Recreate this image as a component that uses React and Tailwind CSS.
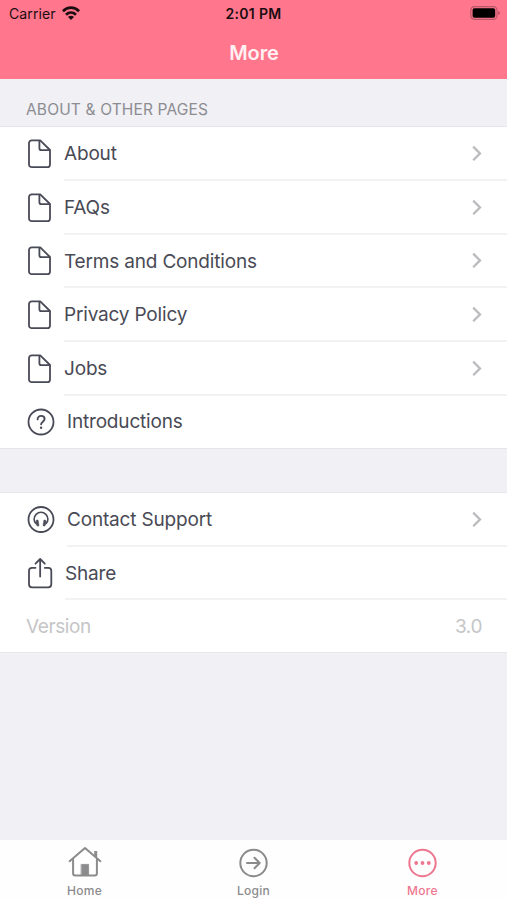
import React from 'react';

const FileIcon = () => (
  <svg width="38" height="32" viewBox="0 0 38 32" fill="none" stroke="#494a57" strokeWidth="1.8" strokeLinejoin="round" className="shrink-0">
    <path d="M5.8 2.3H14.2L24 12V26.4a2.8 2.8 0 0 1-2.8 2.8H5.8a2.8 2.8 0 0 1-2.8-2.8V5.1A2.8 2.8 0 0 1 5.8 2.3Z" />
    <path d="M13.4 2.6V10.2a2 2 0 0 0 2 2H23.8" />
  </svg>
);

const HelpIcon = () => (
  <svg width="41" height="32" viewBox="0 0 41 32" fill="none" stroke="#494a57" strokeWidth="1.8" className="shrink-0">
    <circle cx="15" cy="16" r="12.5" />
    <path d="M11.6 13.4c0-2.2 1.5-3.5 3.5-3.5s3.5 1.3 3.5 3.2c0 2.5-3.5 2.6-3.5 5.2" strokeWidth="1.9" strokeLinecap="round" />
    <circle cx="15.1" cy="21.8" r="1.2" fill="#494a57" stroke="none" />
  </svg>
);

const SupportIcon = () => (
  <svg width="41" height="32" viewBox="0 0 41 32" fill="none" stroke="#494a57" strokeWidth="1.8" className="shrink-0">
    <circle cx="15" cy="15.5" r="12.5" />
    <path d="M10 19.6C8.6 18.4 8.1 16.8 8.1 15.200a6.900 6.900 0 0 1 13.800 0c0 1.600-.5 3.200-1.900 4.400" strokeWidth="1.6" />
    <path d="M10.200 16.300L12 16L13 21.700L11.500 22Q9.500 21.200 10.200 16.300ZM19.800 16.300L18 16L17 21.700L18.500 22Q20.500 21.200 19.800 16.300Z" fill="#494a57" strokeWidth="0.6" />
  </svg>
);

const ShareIcon = () => (
  <svg width="39" height="34" viewBox="0 0 39 34" fill="none" stroke="#494a57" strokeWidth="1.8" strokeLinecap="round" strokeLinejoin="round" className="shrink-0">
    <path d="M9.5 11.8H6a3 3 0 0 0-3 3v13.5a3 3 0 0 0 3 3h16.300a3 3 0 0 0 3-3V14.800a3 3 0 0 0-3-3H18.800" />
    <path d="M14.150 20.500V3.300M9.500 7.700L14.150 3L18.800 7.700" />
  </svg>
);

const Chevron = () => (
  <svg width="10" height="16" viewBox="0 0 10 16" fill="none" stroke="#bcbcbf" strokeWidth="2.3" className="mr-[25px] shrink-0">
    <path d="M1.2 1.6L8 8.4L1.2 15.2" />
  </svg>
);

const WifiIcon = () => (
  <svg width="18" height="14" viewBox="0 0 18 14" fill="none" stroke="#1b0d10" strokeWidth="2.7" className="relative -top-px ml-[6px]">
    <path d="M0.9 5.2C5.5 0.5 12.5 0.5 17.1 5.2" />
    <path d="M4 8.7C6.9 5.9 11.1 5.9 14 8.7" />
    <path d="M9 13.9L6 10.9C7.7 9.3 10.3 9.3 12 10.9Z" fill="#1b0d10" stroke="none" />
  </svg>
);

const BatteryIcon = () => (
  <svg width="31" height="14" viewBox="0 0 31 14" className="relative -top-px">
    <rect x="0.8" y="0.7" width="26.2" height="12.6" rx="3.6" fill="none" stroke="#b9586a" strokeWidth="1.2" />
    <rect x="2.6" y="2.3" width="22.6" height="9.4" rx="1.8" fill="#000" />
    <path d="M28.3 5c1.9.4 1.9 3.6 0 4Z" fill="#a94d5d" />
  </svg>
);

const HomeIcon = () => (
  <svg width="34" height="32" viewBox="0 0 34 32" fill="none" stroke="#8b8b8d" strokeWidth="2" strokeLinecap="round" strokeLinejoin="round">
    <path d="M1.6 15.2L17 2L32.4 15.2" />
    <path d="M5.1 13V27.3a2.2 2.2 0 0 0 2.2 2.2H26.7a2.2 2.2 0 0 0 2.2-2.2V13" />
    <path d="M27.7 11V5" strokeWidth="3" strokeLinecap="butt" />
    <path d="M13.5 18.4h7.1v11h-7.1Z" fill="#8b8b8d" strokeWidth="0.8" />
  </svg>
);

const LoginIcon = () => (
  <svg width="34" height="32" viewBox="0 0 34 32" fill="none" stroke="#8b8b8d" strokeWidth="2">
    <circle cx="16.5" cy="17" r="13.2" />
    <path d="M10 17H22.5M17.5 11.8L22.7 17L17.5 22.2" strokeLinecap="round" strokeLinejoin="round" />
  </svg>
);

const MoreIcon = () => (
  <svg width="34" height="32" viewBox="0 0 34 32" fill="#ee7790">
    <circle cx="16.5" cy="17" r="13.2" fill="none" stroke="#ee7790" strokeWidth="2" />
    <circle cx="10.2" cy="17" r="1.9" />
    <circle cx="16.5" cy="17" r="1.9" />
    <circle cx="22.8" cy="17" r="1.9" />
  </svg>
);

const pages = [
  { label: 'About', icon: <FileIcon />, link: true },
  { label: 'FAQs', icon: <FileIcon />, link: true },
  { label: 'Terms and Conditions', icon: <FileIcon />, link: true },
  { label: 'Privacy Policy', icon: <FileIcon />, link: true },
  { label: 'Jobs', icon: <FileIcon />, link: true },
  { label: 'Introductions', icon: <HelpIcon /> },
];

const support = [
  { label: 'Contact Support', icon: <SupportIcon />, link: true },
  { label: 'Share', icon: <ShareIcon /> },
];

const tabs = [
  { label: 'Home', icon: <HomeIcon /> },
  { label: 'Login', icon: <LoginIcon /> },
  { label: 'More', icon: <MoreIcon />, active: true },
];

const Row = ({ label, icon, link, last }) => (
  <button className={`flex w-full items-center pl-[26px] text-left ${last ? 'h-[52.5px]' : 'h-[53.75px]'}`}>
    {icon}
    <span className={`flex h-full flex-1 items-center justify-between ${last ? '' : 'border-b-2 border-[#f2f2f4]'}`}>
      <span className={`text-[19px] tracking-[-0.18px] text-[#494a55] ${last ? 'pt-px' : 'pt-[3px]'}`}>{label}</span>
      {link && <Chevron />}
    </span>
  </button>
);

const App = () => {
  return (
    <div className="flex h-[900px] w-[507px] flex-col overflow-hidden bg-[#f0f0f5] font-['Inter','Liberation_Sans',sans-serif]">
      <header className="h-[79px] bg-[#ff768d]">
        <div className="grid h-[27px] grid-cols-3 items-center text-[14px] text-[#1b0d10]">
          <div className="flex items-center pl-[9px]">
            <span className="tracking-[0.1px]">Carrier</span>
            <WifiIcon />
          </div>
          <span className="text-center font-semibold tracking-[0.3px]">2:01 PM</span>
          <div className="flex justify-end pr-[6px]">
            <BatteryIcon />
          </div>
        </div>
        <h1 className="pt-[12px] pl-px text-center text-[20px] leading-7 font-semibold tracking-[-0.1px] text-[#fff0f2]">More</h1>
      </header>

      <main className="flex-1">
        <h2 className="flex h-[47px] items-end pb-[5px] pl-[26px] text-[15.5px] tracking-[0.15px] text-[#8c8c91]">ABOUT & OTHER PAGES</h2>
        <section className="border-y border-[#e5e5e9] bg-white">
          {pages.map((item, i) => (
            <Row key={item.label} {...item} last={i === pages.length - 1} />
          ))}
        </section>

        <section className="mt-[42.5px] border-y border-[#e8e8eb] bg-white">
          {support.map((item) => (
            <Row key={item.label} {...item} />
          ))}
          <div className="flex h-[52px] items-center justify-between pt-px pr-[25px] pl-[26px] text-[19px] text-[#c5c5c7]">
            <span className="tracking-[-0.4px]">Version</span>
            <span className="tracking-[-0.4px]">3.0</span>
          </div>
        </section>
      </main>

      <nav className="grid h-[60px] grid-cols-3 bg-[#fefefe]">
        {tabs.map((tab) => (
          <button key={tab.label} className={`flex flex-col items-center pt-[6px] ${tab.active ? 'text-[#ee7790]' : 'text-[#8b8b8d]'}`}>
            {tab.icon}
            <span className="mt-[5px] text-[12px] leading-4 font-medium tracking-[0.3px]">{tab.label}</span>
          </button>
        ))}
      </nav>
    </div>
  );
};

export default App;
